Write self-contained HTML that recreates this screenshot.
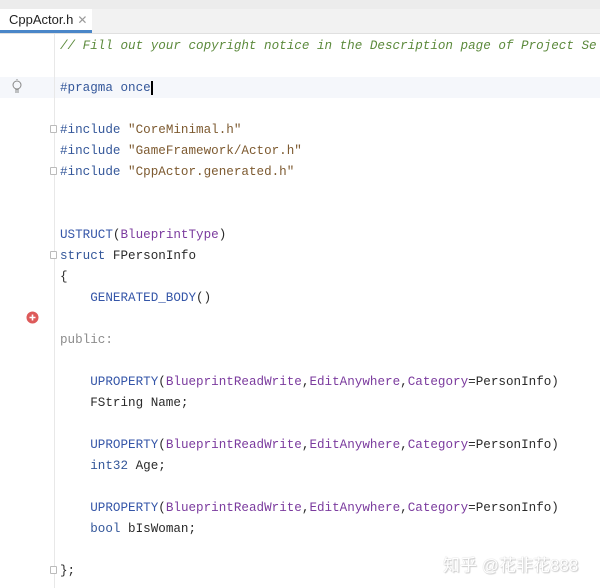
<!DOCTYPE html>
<html><head><meta charset="utf-8"><style>
body{margin:0;width:600px;height:588px;overflow:hidden;background:#fff;position:relative;font-family:"Liberation Mono",monospace}
.top{position:absolute;left:0;top:0;width:600px;height:9px;background:#ececec}
.tabbar{position:absolute;left:0;top:9px;width:600px;height:24px;background:#f2f2f2;border-bottom:1px solid #e0e0e0}
.tab{position:absolute;left:0;top:9px;width:92px;height:24px;background:#fff;border-bottom:3px solid #4a86c8;box-sizing:border-box;font:13px "Liberation Sans",sans-serif;color:#222;line-height:22px;padding-left:9px}
.tab .x{color:#999;font-size:12px;margin-left:4px}
.sep{position:absolute;left:54px;top:34px;width:1px;height:554px;background:#e8e8e8}
.hl{position:absolute;left:0;top:77px;width:600px;height:21px;background:#f5f7fb}
.l{position:absolute;left:60px;font-size:12.6px;white-space:pre;line-height:21px;color:#2a2a2a}
.c{color:#5c8a3c;font-style:italic}.k{color:#34579a}.s{color:#7d5a30}.m{color:#3556a8}.p{color:#7b3b9e}.g{color:#8c8c8c}
.wm{position:absolute;left:443px;top:551px;font:17px "Liberation Sans","Noto Sans CJK SC",sans-serif;color:#fff;text-shadow:0 0 1px #bbb,1px 1px 1px #ccc}
.fold{position:absolute;left:50px;width:7px;height:8px;border:1px solid #bbb;border-radius:1px;background:#fff;box-sizing:border-box}
</style></head><body>
<div class="top"></div><div class="tabbar"></div>
<div class="tab">CppActor.h<span class="x">✕</span></div>
<div class="hl"></div>
<div class="sep"></div>
<div class="fold" style="top:125px"></div><div class="fold" style="top:167px"></div><div class="fold" style="top:251px"></div><div class="fold" style="top:566px"></div>
<svg style="position:absolute;left:10px;top:79px" width="14" height="16"><circle cx="7" cy="6" r="4" fill="none" stroke="#888"/><path d="M5 11h4M5 13h4M7 1v-1" stroke="#888"/></svg>
<svg style="position:absolute;left:26px;top:311px" width="13" height="13"><circle cx="6.5" cy="6.5" r="6" fill="#dd5a5a"/><path d="M3.5 6.5h6M6.5 3.5v6" stroke="#fff" stroke-width="1.6"/></svg>
<div class="l" style="top:36px"><span class="c">// Fill out your copyright notice in the Description page of Project Se</span></div>
<div class="l" style="top:78px"><span class="k">#pragma once</span><span style="border-left:2px solid #000"></span></div>
<div class="l" style="top:120px"><span class="k">#include</span> <span class="s">"CoreMinimal.h"</span></div>
<div class="l" style="top:141px"><span class="k">#include</span> <span class="s">"GameFramework/Actor.h"</span></div>
<div class="l" style="top:162px"><span class="k">#include</span> <span class="s">"CppActor.generated.h"</span></div>
<div class="l" style="top:225px"><span class="m">USTRUCT</span>(<span class="p">BlueprintType</span>)</div>
<div class="l" style="top:246px"><span class="k">struct</span> FPersonInfo</div>
<div class="l" style="top:267px">{</div>
<div class="l" style="top:288px">    <span class="m">GENERATED_BODY</span>()</div>
<div class="l" style="top:330px"><span class="g">public:</span></div>
<div class="l" style="top:372px">    <span class="m">UPROPERTY</span>(<span class="p">BlueprintReadWrite</span>,<span class="p">EditAnywhere</span>,<span class="p">Category</span>=PersonInfo)</div>
<div class="l" style="top:393px">    FString Name;</div>
<div class="l" style="top:435px">    <span class="m">UPROPERTY</span>(<span class="p">BlueprintReadWrite</span>,<span class="p">EditAnywhere</span>,<span class="p">Category</span>=PersonInfo)</div>
<div class="l" style="top:456px">    <span class="k">int32</span> Age;</div>
<div class="l" style="top:498px">    <span class="m">UPROPERTY</span>(<span class="p">BlueprintReadWrite</span>,<span class="p">EditAnywhere</span>,<span class="p">Category</span>=PersonInfo)</div>
<div class="l" style="top:519px">    <span class="k">bool</span> bIsWoman;</div>
<div class="l" style="top:561px">};</div>
<div class="wm">知乎 @花非花888</div>
</body></html>
